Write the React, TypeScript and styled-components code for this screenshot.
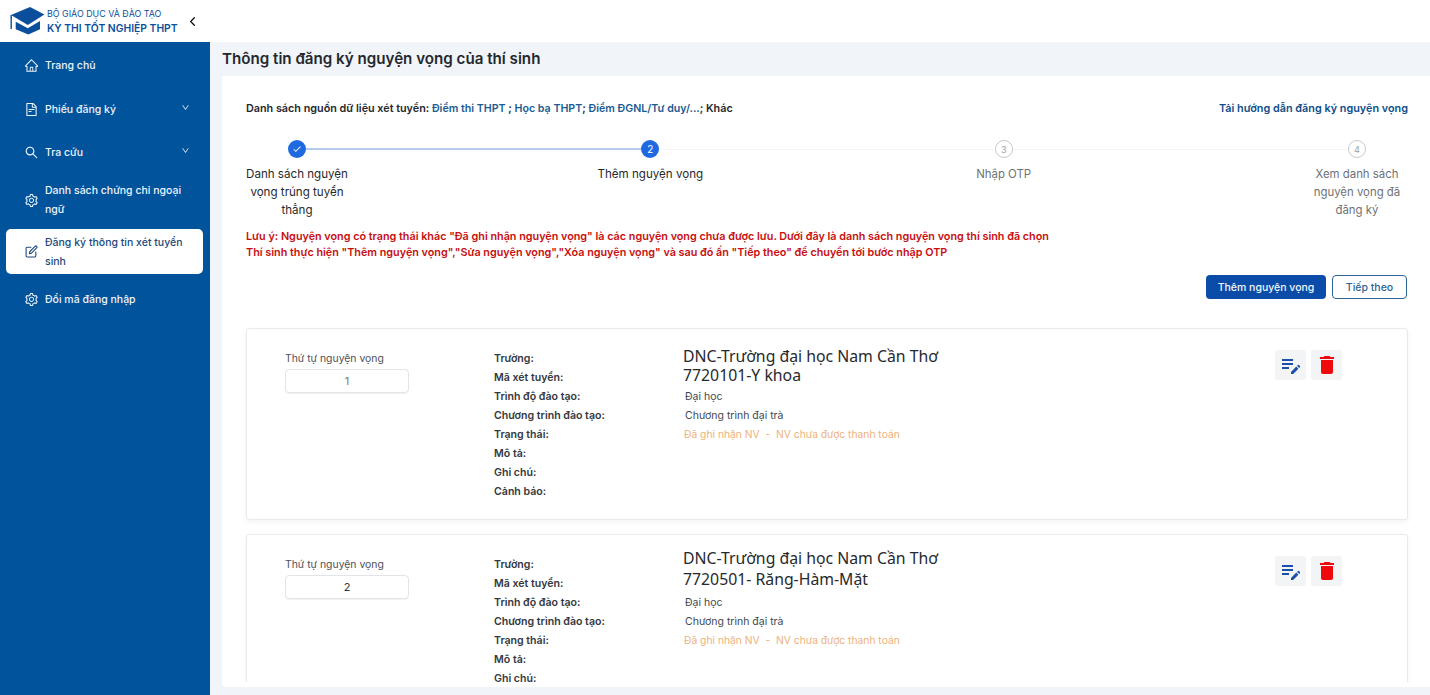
import React from 'react'
import styled, {createGlobalStyle} from 'styled-components'
import {FiChevronLeft, FiEdit} from 'react-icons/fi'
import {AiOutlineHome, AiOutlineFileText, AiOutlineSearch, AiOutlineDown, AiOutlineSetting} from 'react-icons/ai'
import {MdEditNote, MdDelete, MdCheck} from 'react-icons/md'

const GlobalStyle = createGlobalStyle`
    html, body {
        margin: 0;
        height: 100%;
        overflow: hidden;
        font-family: Inter, "Liberation Sans", sans-serif;
        color: #1f2329;
    }
    * { box-sizing: border-box; }
`

const menu = [
    {label: 'Trang chủ', icon: <AiOutlineHome />, height: 46},
    {label: 'Phiếu đăng ký', icon: <AiOutlineFileText />, arrow: true, height: 42},
    {label: 'Tra cứu', icon: <AiOutlineSearch />, arrow: true, height: 44},
    {label: 'Danh sách chứng chỉ ngoại ngữ', icon: <AiOutlineSetting />, height: 52, gap: 3},
    {label: 'Đăng ký thông tin xét tuyển sinh', icon: <FiEdit size={13} />, active: true, height: 45},
    {label: 'Đổi mã đăng nhập', icon: <AiOutlineSetting />, height: 50},
]

const steps = [
    {label: 'Danh sách nguyện vọng trúng tuyển thẳng', state: 'done', mark: <MdCheck />},
    {label: 'Thêm nguyện vọng', state: 'current', mark: '2'},
    {label: 'Nhập OTP', state: 'todo', mark: '3'},
    {label: 'Xem danh sách nguyện vọng đã đăng ký', state: 'todo', mark: '4'},
]

const wishes = [
    {order: 1, major: '7720101-Y khoa', muted: true, lineHeight: 19, lift: 2},
    {order: 2, major: '7720501- Răng-Hàm-Mặt', muted: false, lineHeight: 21, lift: 7},
]

const labels = ['Trường:', 'Mã xét tuyển:', 'Trình độ đào tạo:', 'Chương trình đào tạo:', 'Trạng thái:', 'Mô tả:', 'Ghi chú:', 'Cảnh báo:']

export default function App() {
    return (
        <Page>
            <GlobalStyle />
            <Header>
                <Brand>
                    <svg width="36" height="28" viewBox="0 0 36 28">
                        <path d="M20 0 L34.4 7.5 L17.8 18 L1 8 Z" fill="#0b4f9c" />
                        <path d="M5.7 14.7 L17.8 21.3 L30 14 L30 22.3 L18.3 27.6 L5.7 22.3 Z" fill="#0b4f9c" />
                        <path d="M1.2 8 L1.2 22" stroke="#0b4f9c" strokeWidth="1.4" />
                    </svg>
                    <BrandText>
                        <BrandTop>BỘ GIÁO DỤC VÀ ĐÀO TẠO</BrandTop>
                        <BrandName>KỲ THI TỐT NGHIỆP THPT</BrandName>
                    </BrandText>
                    <Collapse><FiChevronLeft /></Collapse>
                </Brand>
            </Header>
            <Body>
                <Sidebar>
                    {menu.map(item => (
                        <MenuItem key={item.label} $active={item.active} $height={item.height} $gap={item.gap}>
                            <MenuIcon>{item.icon}</MenuIcon>
                            <MenuLabel>{item.label}</MenuLabel>
                            {item.arrow && <MenuArrow><AiOutlineDown /></MenuArrow>}
                        </MenuItem>
                    ))}
                </Sidebar>
                <Main>
                    <PageTitle>Thông tin đăng ký nguyện vọng của thí sinh</PageTitle>
                    <Panel>
                        <PanelScroll>
                            <SourceRow>
                                <Sources>
                                    Danh sách nguồn dữ liệu xét tuyển: <SourceLink>Điểm thi THPT</SourceLink> ; <SourceLink>Học bạ THPT</SourceLink>; <SourceLink>Điểm ĐGNL/Tư duy/...</SourceLink>; Khác
                                </Sources>
                                <Guide>Tải hướng dẫn đăng ký nguyện vọng</Guide>
                            </SourceRow>
                            <Stepper>
                                {steps.map((step, i) => (
                                    <Step key={step.label} $index={i}>
                                        <StepMark $state={step.state}>{step.mark}</StepMark>
                                        <StepLabel $state={step.state}>{step.label}</StepLabel>
                                    </Step>
                                ))}
                            </Stepper>
                            <Notice>
                                Lưu ý: Nguyện vọng có trạng thái khác "Đã ghi nhận nguyện vọng" là các nguyện vọng chưa được lưu. Dưới đây là danh sách nguyện vọng thí sinh đã chọn<br />
                                Thí sinh thực hiện "Thêm nguyện vọng","Sửa nguyện vọng","Xóa nguyện vọng" và sau đó ấn "Tiếp theo" để chuyển tới bước nhập OTP
                            </Notice>
                            <Actions>
                                <PrimaryButton>Thêm nguyện vọng</PrimaryButton>
                                <OutlineButton>Tiếp theo</OutlineButton>
                            </Actions>
                            {wishes.map(wish => (
                                <WishCard key={wish.order}>
                                    <OrderColumn>
                                        <OrderLabel>Thứ tự nguyện vọng</OrderLabel>
                                        <OrderValue $muted={wish.muted}>{wish.order}</OrderValue>
                                    </OrderColumn>
                                    <LabelColumn>
                                        {labels.map(label => <FieldLabel key={label}>{label}</FieldLabel>)}
                                    </LabelColumn>
                                    <ValueColumn>
                                        <School $lineHeight={wish.lineHeight} $lift={wish.lift}>DNC-Trường đại học Nam Cần Thơ<br />{wish.major}</School>
                                        <FieldValue>Đại học</FieldValue>
                                        <FieldValue>Chương trình đại trà</FieldValue>
                                        <Status>Đã ghi nhận NV  -  NV chưa được thanh toán</Status>
                                    </ValueColumn>
                                    <CardTools>
                                        <ToolButton $color="#1c4fa8"><MdEditNote /></ToolButton>
                                        <ToolButton $color="#ee0a0a"><MdDelete /></ToolButton>
                                    </CardTools>
                                </WishCard>
                            ))}
                        </PanelScroll>
                    </Panel>
                </Main>
            </Body>
        </Page>
    )
}

const Page = styled.div`
    width: 1430px;
    height: 695px;
    display: flex;
    flex-direction: column;
    overflow: hidden;
    background: #f1f4f9;
`
const Header = styled.header`
    height: 42px;
    flex: none;
    background: #fff;
    display: flex;
    align-items: center;
`
const Brand = styled.div`
    display: flex;
    align-items: center;
    padding-left: 10px;
`
const BrandText = styled.div`
    margin-left: 1px;
    display: flex;
    flex-direction: column;
    gap: 1px;
`
const BrandTop = styled.div`
    font-size: 8.9px;
    line-height: 13px;
    color: #0b4f9c;
`
const BrandName = styled.div`
    font-size: 10.35px;
    line-height: 15px;
    font-weight: 600;
    color: #0b4f9c;
`
const Collapse = styled.div`
    margin-left: 7px;
    font-size: 15px;
    display: flex;
    color: #111;
    stroke-width: 3;
`
const Body = styled.div`
    flex: 1;
    display: flex;
    min-height: 0;
`
const Sidebar = styled.nav`
    width: 210px;
    flex: none;
    background: #01539c;
    padding: 0 7px 0 6px;
`
const MenuItem = styled.div<{$active?: boolean; $height: number; $gap?: number}>`
    height: ${p => p.$height}px;
    margin-bottom: ${p => p.$gap || 0}px;
    display: flex;
    align-items: center;
    padding: 0 16px 0 18px;
    border-radius: 5px;
    color: ${p => p.$active ? '#1b4a7a' : '#eef4fb'};
    background: ${p => p.$active ? '#fff' : 'transparent'};
`
const MenuIcon = styled.span`
    width: 15px;
    font-size: 15px;
    display: flex;
    justify-content: center;
    margin-right: 6px;
    flex: none;
`
const MenuLabel = styled.span`
    font-size: 10.5px;
    line-height: 19px;
    font-weight: 500;
    flex: 1;
`
const MenuArrow = styled.span`
    font-size: 9px;
    display: flex;
    margin-right: -3px;
    margin-top: -3px;
`
const Main = styled.main`
    flex: 1;
    min-width: 0;
    padding: 0 0 8px 12px;
    display: flex;
    flex-direction: column;
`
const PageTitle = styled.h1`
    margin: 0;
    height: 34px;
    font-size: 15.15px;
    line-height: 34px;
    font-weight: 600;
    color: #24282e;
`
const Panel = styled.div`
    flex: 1;
    min-height: 0;
    display: flex;
    flex-direction: column;
    background: #fff;
    border-radius: 0 0 0 4px;
    padding-bottom: 5px;
`
const PanelScroll = styled.div`
    flex: 1;
    min-height: 0;
    overflow: hidden;
    padding: 24px 22px 0 24px;
`
const SourceRow = styled.div`
    display: flex;
    justify-content: space-between;
    font-size: 10.8px;
    line-height: 17px;
    font-weight: 600;
`
const Sources = styled.div`
    color: #24282e;
`
const SourceLink = styled.span`
    font-size: 10.65px;
    color: #1a5c92;
`
const Guide = styled.div`
    font-size: 10.85px;
    color: #0f4f8a;
`
const Stepper = styled.div`
    display: flex;
    justify-content: space-between;
    margin-top: 23px;
`
const Step = styled.div<{$index: number}>`
    width: 102px;
    display: flex;
    flex-direction: column;
    align-items: center;
    position: relative;
    &::after {
        content: '';
        display: ${p => p.$index === 3 ? 'none' : 'block'};
        position: absolute;
        top: ${p => p.$index === 0 ? 8 : 9}px;
        left: 60px;
        width: 335px;
        height: ${p => p.$index === 0 ? 2 : 1}px;
        background: ${p => p.$index === 0 ? '#b3cdea' : '#f4f5f7'};
    }
`
const StepMark = styled.div<{$state: string}>`
    width: 18px;
    height: 18px;
    border-radius: 50%;
    font-size: ${p => p.$state === 'todo' ? 9 : 10}px;
    display: flex;
    align-items: center;
    justify-content: center;
    color: ${p => p.$state === 'todo' ? '#9a9fa6' : '#fff'};
    background: ${p => p.$state === 'todo' ? '#fff' : '#1f6ae0'};
    border: ${p => p.$state === 'todo' ? '1px solid #c6cacf' : 'none'};
`
const StepLabel = styled.div<{$state: string}>`
    margin-top: 7px;
    font-size: ${p => p.$state === 'todo' ? 11.4 : 11.6}px;
    line-height: 18px;
    text-align: center;
    white-space: ${p => p.$state === 'current' ? 'nowrap' : 'normal'};
    color: ${p => p.$state === 'todo' ? '#6d7278' : '#26292e'};
`
const Notice = styled.div`
    margin-top: 10px;
    font-size: 10.8px;
    line-height: 16px;
    font-weight: 600;
    color: #c80f10;
    white-space: nowrap;
`
const Actions = styled.div`
    display: flex;
    justify-content: flex-end;
    gap: 6px;
    margin-top: 14px;
    padding-right: 1px;
`
const PrimaryButton = styled.button`
    height: 24px;
    width: 120px;
    padding: 0;
    border: none;
    border-radius: 4px;
    background: #0a4ca8;
    color: #f3f6fb;
    font: 500 10.5px Inter, sans-serif;
`
const OutlineButton = styled.button`
    height: 24px;
    width: 75px;
    padding: 0;
    border: 1px solid #2d6396;
    border-radius: 4px;
    background: #fff;
    color: #2d6396;
    font: 500 10.5px Inter, sans-serif;
`
const WishCard = styled.div`
    margin-top: 29px;
    height: 192px;
    border: 1px solid #e8eaee;
    border-radius: 3px;
    box-shadow: 0 2px 5px rgba(30, 50, 90, 0.06);
    display: flex;
    padding: 20px 0 0 38px;
    position: relative;
    & + & {
        margin-top: 14px;
    }
`
const OrderColumn = styled.div`
    width: 209px;
    flex: none;
`
const OrderLabel = styled.div`
    font-size: 10.4px;
    line-height: 20px;
    color: #4c5157;
`
const OrderValue = styled.div<{$muted: boolean}>`
    width: 124px;
    height: 24px;
    border: 1px solid #e2e4e8;
    border-radius: 4px;
    box-shadow: 0 1px 1px rgba(0, 0, 0, 0.06);
    font-size: 11px;
    line-height: 22px;
    text-align: center;
    color: ${p => p.$muted ? '#777' : '#333'};
`
const LabelColumn = styled.div`
    width: 189px;
    flex: none;
`
const FieldLabel = styled.div`
    font-size: 10.6px;
    line-height: 19px;
    font-weight: 600;
    color: #34383e;
`
const ValueColumn = styled.div`
    flex: 1;
`
const School = styled.div<{$lineHeight: number; $lift: number}>`
    font-family: "Noto Sans", "Open Sans", sans-serif;
    font-size: 15.8px;
    line-height: ${p => p.$lineHeight}px;
    margin-top: -${p => p.$lift}px;
    margin-bottom: ${p => p.$lift === 2 ? 2 : 3}px;
    color: #26292e;
`
const FieldValue = styled.div`
    margin-left: 2px;
    font-size: 10.5px;
    line-height: 19px;
    color: #44484e;
`
const Status = styled(FieldValue)`
    margin-left: 1px;
    font-size: 10.3px;
    color: #eeb27c;
    white-space: pre;
`
const CardTools = styled.div`
    position: absolute;
    top: 21px;
    right: 65px;
    display: flex;
    gap: 5px;
`
const ToolButton = styled.div<{$color: string}>`
    width: 31px;
    height: 30px;
    border-radius: 3px;
    background: #f3f4f6;
    color: ${p => p.$color};
    font-size: 24px;
    display: flex;
    align-items: center;
    justify-content: center;
`
